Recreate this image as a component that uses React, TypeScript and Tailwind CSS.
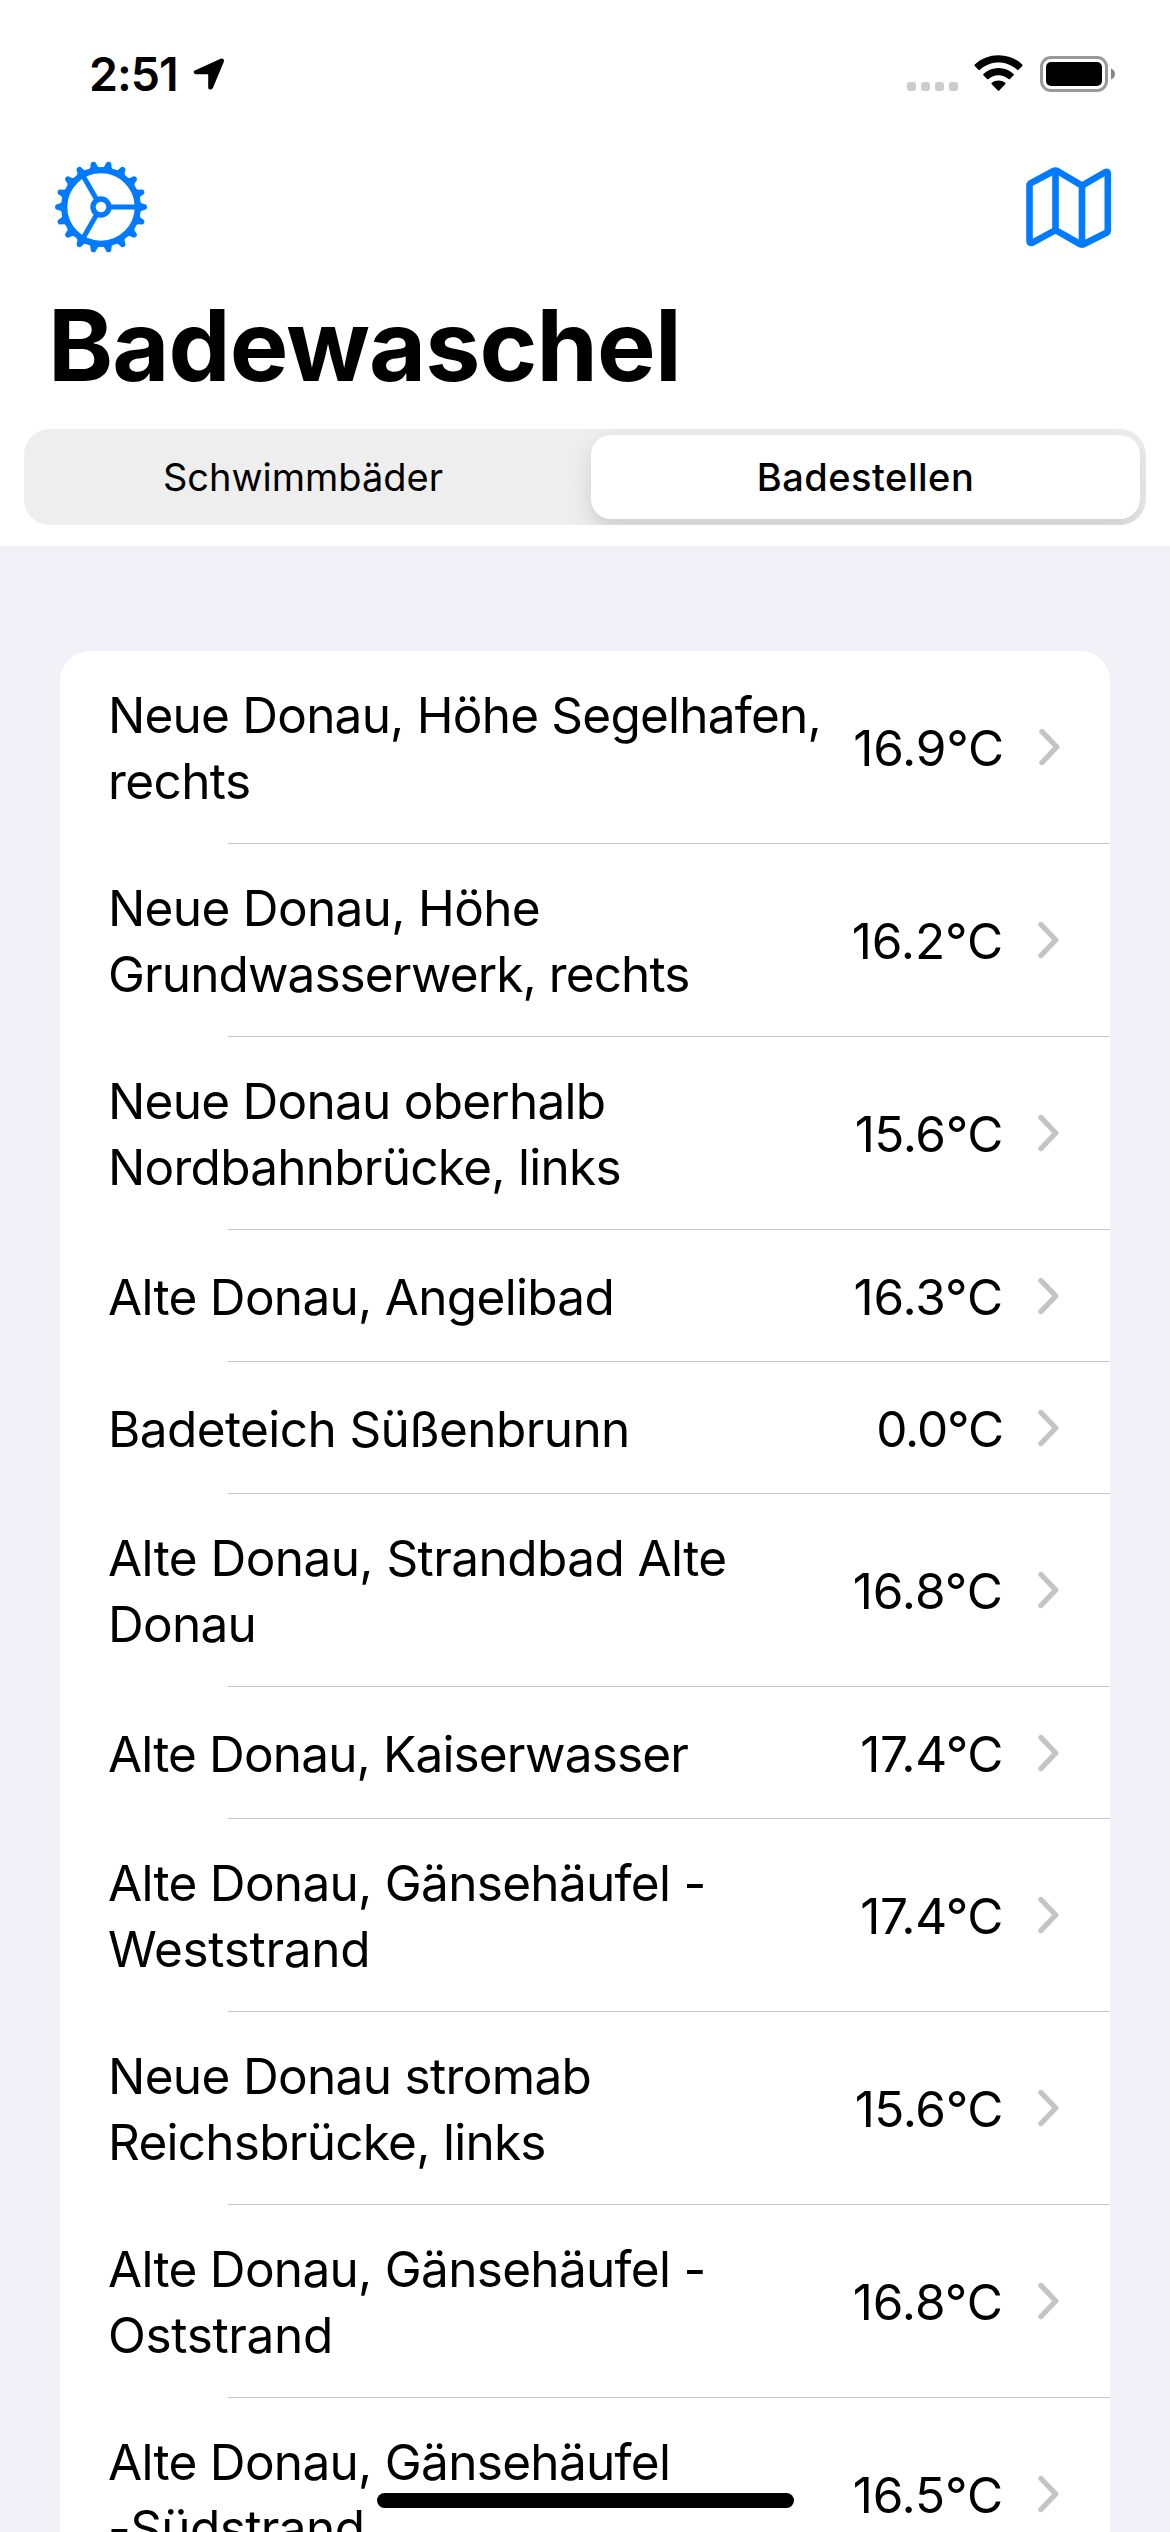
import React from "react";

type Line = { text: string; tracking?: string };
type Row = { name: Line[]; temp: string; tempTracking?: string };

const rows: Row[] = [
  {
    name: [
      { text: "Neue Donau, Höhe Segelhafen,", tracking: "tracking-[-0.78px]" },
      { text: "rechts", tracking: "tracking-[-0.6px]" },
    ],
    temp: "16.9°C",
    tempTracking: "tracking-[-0.2px]",
  },
  {
    name: [
      { text: "Neue Donau, Höhe", tracking: "tracking-[-0.67px]" },
      { text: "Grundwasserwerk, rechts", tracking: "tracking-[-0.9px]" },
    ],
    temp: "16.2°C",
  },
  {
    name: [{ text: "Neue Donau oberhalb" }, { text: "Nordbahnbrücke, links" }],
    temp: "15.6°C",
    tempTracking: "tracking-[-0.4px]",
  },
  { name: [{ text: "Alte Donau, Angelibad", tracking: "tracking-[-0.7px]" }], temp: "16.3°C" },
  {
    name: [{ text: "Badeteich Süßenbrunn", tracking: "tracking-[-0.6px]" }],
    temp: "0.0°C",
    tempTracking: "tracking-[-1.1px]",
  },
  {
    name: [{ text: "Alte Donau, Strandbad Alte", tracking: "tracking-[-0.57px]" }, { text: "Donau" }],
    temp: "16.8°C",
    tempTracking: "tracking-[0px]",
  },
  {
    name: [{ text: "Alte Donau, Kaiserwasser", tracking: "tracking-[-0.85px]" }],
    temp: "17.4°C",
    tempTracking: "tracking-[-0.45px]",
  },
  {
    name: [
      { text: "Alte Donau, Gänsehäufel -", tracking: "tracking-[-0.7px]" },
      { text: "Weststrand", tracking: "tracking-[-0.3px]" },
    ],
    temp: "17.4°C",
    tempTracking: "tracking-[-0.45px]",
  },
  {
    name: [
      { text: "Neue Donau stromab", tracking: "tracking-[-0.66px]" },
      { text: "Reichsbrücke, links" },
    ],
    temp: "15.6°C",
    tempTracking: "tracking-[-0.4px]",
  },
  {
    name: [
      { text: "Alte Donau, Gänsehäufel -", tracking: "tracking-[-0.7px]" },
      { text: "Oststrand", tracking: "tracking-[-0.35px]" },
    ],
    temp: "16.8°C",
    tempTracking: "tracking-[0px]",
  },
  {
    name: [
      { text: "Alte Donau, Gänsehäufel", tracking: "tracking-[-0.7px]" },
      { text: "-Südstrand", tracking: "tracking-[-0.6px]" },
    ],
    temp: "16.5°C",
  },
];

const teeth = Array.from({ length: 18 }, (_, i) => i * 20);

function GearIcon() {
  return (
    <svg className="h-[92px] w-[92px] text-[#007aff]" viewBox="-46 -46 92 92" fill="none" stroke="currentColor">
      <circle r="36.8" strokeWidth="6.2" />
      <circle r="8" strokeWidth="5.4" />
      {[0, 120, 240].map((a) => (
        <path key={a} d="M9 0H36" strokeWidth="5" transform={`rotate(${a})`} />
      ))}
      {teeth.map((a) => (
        <path
          key={a}
          d="M38.4 -5.6 L40.6 -3.7 L44.8 -2.4 Q46 -1.8 46 0 Q46 1.8 44.8 2.4 L40.6 3.7 L38.4 5.6 Z"
          fill="currentColor"
          stroke="none"
          transform={`rotate(${a})`}
        />
      ))}
    </svg>
  );
}

function MapIcon() {
  return (
    <svg
      className="h-[82px] w-[86px] text-[#007aff]"
      viewBox="0 0 86 82"
      fill="none"
      stroke="currentColor"
      strokeWidth="6.6"
      strokeLinejoin="round"
      strokeLinecap="round"
    >
      <path d="M3.5 18.5Q3.5 17 4.9 16.2L27.6 4Q29.5 3 31.4 4L56 18.6L79.5 5Q81.8 4 81.8 6.4V63.5Q81.8 65 80.4 65.8L58 77Q56 78 54 77L29.5 63.2L6 75.8Q3.5 76.6 3.5 74.2Z" />
      <path d="M29.5 5V63M56 19V77" />
    </svg>
  );
}

function StatusBar() {
  return (
    <div className="flex h-[141px] items-start justify-between pl-[89px] pr-[55px] pt-[46px]">
      <div className="flex items-start">
        <span className="text-[46.5px] font-semibold leading-[56px] tracking-[-1px]">2:51</span>
        <svg className="ml-[15px] mt-[12px] h-8 w-8" viewBox="0 0 32 32">
          <path
            d="M2.4 12.2 L27.6 0.8 Q30.8 -0.2 31 2.8 Q31 3.4 30.6 4.2 L20 29.8 Q19.2 31.6 17.6 31.6 Q15.2 31.6 15.2 29 L15.2 17 Q15.2 16.2 14.4 16.2 L2.8 16.2 Q0.6 16 0.6 14 Q0.6 13 2.4 12.2Z"
            fill="#000"
          />
        </svg>
      </div>
      <div className="flex items-start">
        <div className="mt-[36px] flex gap-[5px]">
          {[0, 1, 2, 3].map((i) => (
            <div key={i} className="h-[9px] w-[9px] rounded-[3px] bg-[#cccccc]" />
          ))}
        </div>
        <svg className="ml-4 mt-[9px] h-[36px] w-[49px]" viewBox="0 0 49 36" fill="#000">
          <path d="M24.5 0.2C33.6 0.2 42 3.6 48.2 9.4Q48.9 10.1 48.2 10.9L44.6 14.8Q43.9 15.5 43.1 14.8C38 10.2 31.6 7.6 24.5 7.6S11 10.2 5.9 14.8Q5.1 15.5 4.4 14.8L0.8 10.9Q0.1 10.1 0.8 9.4C7 3.6 15.4 0.2 24.5 0.2Z" />
          <path d="M24.5 13C30.3 13 35.6 15.2 39.6 18.9Q40.3 19.6 39.6 20.3L36 23.9Q35.3 24.6 34.5 23.9C31.8 21.6 28.3 20.2 24.5 20.2S17.2 21.6 14.5 23.9Q13.7 24.6 13 23.9L9.4 20.3Q8.7 19.6 9.4 18.9C13.4 15.2 18.7 13 24.5 13Z" />
          <path d="M24.5 25.4C27 25.4 29.4 26.2 31.2 27.8Q31.9 28.5 31.2 29.2L25.2 35.4Q24.5 36.1 23.8 35.4L17.8 29.2Q17.1 28.5 17.8 27.8C19.6 26.2 22 25.4 24.5 25.4Z" />
        </svg>
        <svg className="ml-[17px] mt-[10px] h-[36px] w-[75px]" viewBox="0 0 75 36">
          <rect x="1.5" y="1.5" width="65" height="33" rx="9.5" fill="none" stroke="#999999" strokeWidth="3" />
          <rect x="6" y="6" width="56" height="24" rx="5" fill="#000" />
          <path d="M71 12.5Q75 14 75 18T71 23.5Z" fill="#858585" />
        </svg>
      </div>
    </div>
  );
}

function Chevron() {
  return (
    <svg
      className="ml-[34px] h-[38px] w-[23px]"
      viewBox="0 0 23 38"
      fill="none"
      stroke="#c4c4c6"
      strokeWidth="5.4"
      strokeLinecap="round"
      strokeLinejoin="round"
    >
      <path d="M4 3.5L18.7 19L4 34.5" />
    </svg>
  );
}

function BathingRow({ row, first }: { row: Row; first: boolean }) {
  const height = row.name.length > 1 ? "h-[192px]" : "h-[131px]";
  const inset = first ? "pr-[49px]" : "pr-[50px]";
  return (
    <div className="flex shrink-0 flex-col">
      <div className={`flex items-center pl-[48px] ${height} ${inset}`}>
        <div className="flex-1 whitespace-nowrap pt-[2px] text-[49.5px] leading-[66px]">
          {row.name.map((line) => (
            <div key={line.text} className={line.tracking ?? "tracking-[-0.74px]"}>
              {line.text}
            </div>
          ))}
        </div>
        <div className={`pt-[2px] text-[49.5px] leading-[66px] ${row.tempTracking ?? "tracking-[-0.1px]"}`}>
          {row.temp}
        </div>
        <Chevron />
      </div>
      <div className="ml-[168px] h-px bg-[#c6c6c8]" />
    </div>
  );
}

export default function App() {
  return (
    <div className="relative flex h-[2532px] w-[1170px] flex-col overflow-hidden bg-[#f2f1f7] font-['Inter',sans-serif] text-black">
      <header className="flex h-[546px] shrink-0 flex-col bg-white">
        <StatusBar />
        <div className="flex h-[150px] items-start justify-between pl-[55px] pr-[58px]">
          <div className="mt-[20px]">
            <GearIcon />
          </div>
          <div className="mt-[26px]">
            <MapIcon />
          </div>
        </div>
        <h1 className="h-[138px] pl-[48px] text-[98.5px] font-bold leading-[109px] tracking-[-0.87px]">Badewaschel</h1>
        <div className="mx-6 flex h-24 overflow-hidden rounded-[26px] bg-[#eeeeee] p-1.5">
          <div className="flex flex-1 items-center justify-center pr-[15px] text-[38px] font-normal">
            Schwimmbäder
          </div>
          <div className="flex w-[549px] items-center justify-center rounded-[20px] bg-white text-[38px] font-medium tracking-[0.5px] shadow-[0_9px_24px_rgba(0,0,0,0.12),0_9px_3px_rgba(0,0,0,0.02)]">
            Badestellen
          </div>
        </div>
      </header>
      <main className="mx-[60px] mt-[105px] flex shrink-0 flex-col rounded-t-[30px] bg-white">
        {rows.map((row, i) => (
          <BathingRow key={i} row={row} first={i === 0} />
        ))}
      </main>
      <div className="absolute left-[377px] top-[2493px] h-[15px] w-[417px] rounded-full bg-black" />
    </div>
  );
}
